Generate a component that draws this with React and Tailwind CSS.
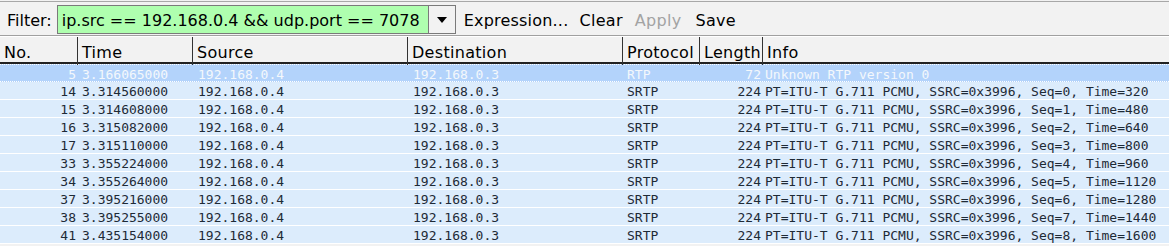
import React from "react";

const rows = [
  [5, "3.166065000", "RTP", 72, "Unknown RTP version 0"],
  [14, "3.314560000", "SRTP", 224, "PT=ITU-T G.711 PCMU, SSRC=0x3996, Seq=0, Time=320"],
  [15, "3.314608000", "SRTP", 224, "PT=ITU-T G.711 PCMU, SSRC=0x3996, Seq=1, Time=480"],
  [16, "3.315082000", "SRTP", 224, "PT=ITU-T G.711 PCMU, SSRC=0x3996, Seq=2, Time=640"],
  [17, "3.315110000", "SRTP", 224, "PT=ITU-T G.711 PCMU, SSRC=0x3996, Seq=3, Time=800"],
  [33, "3.355224000", "SRTP", 224, "PT=ITU-T G.711 PCMU, SSRC=0x3996, Seq=4, Time=960"],
  [34, "3.355264000", "SRTP", 224, "PT=ITU-T G.711 PCMU, SSRC=0x3996, Seq=5, Time=1120"],
  [37, "3.395216000", "SRTP", 224, "PT=ITU-T G.711 PCMU, SSRC=0x3996, Seq=6, Time=1280"],
  [38, "3.395255000", "SRTP", 224, "PT=ITU-T G.711 PCMU, SSRC=0x3996, Seq=7, Time=1440"],
  [41, "3.435154000", "SRTP", 224, "PT=ITU-T G.711 PCMU, SSRC=0x3996, Seq=8, Time=1600"],
];

const cols = "grid grid-cols-[78px_115px_215px_215px_77px_63px_1fr]";

const App = () => {
  return (
    <div className="w-[1169px] h-[246px] overflow-hidden bg-[#f2f2f2] font-['DejaVu_Sans',sans-serif]">
      {/* filter toolbar */}
      <div className="mt-[1px] border-t border-[#a8a8a8] border-b border-b-[#a0a0a0] h-[35px] flex items-center text-[16px] text-black">
        <span className="ml-[7px] mr-[5px] pt-[4px]">Filter:</span>
        <div className="flex h-[29px] mt-[2px]">
          <div className="w-[371px] bg-[#afffaf] border border-[#7a7a7a] border-r-0 flex items-center pl-[4px] pt-[3px] whitespace-nowrap overflow-hidden">
            ip.src == 192.168.0.4 &amp;&amp; udp.port == 7078
          </div>
          <div className="w-[28px] border border-[#7a7a7a] bg-[#f2f2f2] flex items-center justify-center">
            <svg width="10" height="6" viewBox="0 0 10 6">
              <path d="M0 0 L10 0 L5 6 Z" fill="#000" />
            </svg>
          </div>
        </div>
        <span className="ml-[8px] pt-[4px] tracking-[0.2px]">Expression...</span>
        <span className="ml-[11px] pt-[4px] tracking-[0.3px]">Clear</span>
        <span className="ml-[12px] pt-[4px] tracking-[0.3px] text-[#a3a3a3]">Apply</span>
        <span className="ml-[14px] pt-[4px] tracking-[0.3px]">Save</span>
      </div>

      {/* column headers */}
      <div className={`${cols} border-t border-white h-[28px] border-b-2 border-b-[#222] text-[16px] text-black tracking-[0.3px]`}>
        {["No.", "Time", "Source", "Destination", "Protocol", "Length", "Info"].map((h, i) => (
          <div
            key={h}
            className={`flex items-center pl-[4px] pt-[4px] ${i < 6 ? "border-r border-[#333]" : ""}`}
          >
            {h}
          </div>
        ))}
      </div>

      {/* packet list */}
      <div className="font-['DejaVu_Sans_Mono',monospace] text-[13px]">
        {rows.map(([no, time, proto, len, info], i) => {
          const sel = i === 0;
          return (
            <div
              key={no}
              className={`${cols} h-[18px] items-center whitespace-nowrap ${
                sel
                  ? "bg-[#b3d3fb] text-[#f4f8fc] border-y border-dotted border-white"
                  : "bg-[#dcecfc] text-[#1e2a36] border-b border-white"
              }`}
            >
              <div className="text-right pr-[2px]">{no}</div>
              <div className="pl-[4px]">{time}</div>
              <div className="pl-[5px]">192.168.0.4</div>
              <div className="pl-[5px]">192.168.0.3</div>
              <div className="pl-[4px]">{proto}</div>
              <div className="text-right pr-[2px]">{len}</div>
              <div className="pl-[2px]">{info}</div>
            </div>
          );
        })}
      </div>
    </div>
  );
};

export default App;
